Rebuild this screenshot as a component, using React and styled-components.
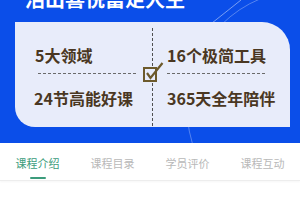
import React from 'react';
import styled, { createGlobalStyle } from 'styled-components';

const GlobalStyle = createGlobalStyle`
  html, body {
    margin: 0;
    padding: 0;
    background: #fff;
  }
  body {
    font-family: "Noto Sans CJK SC", "Noto Sans", sans-serif;
  }
`;

const Page = styled.div`
  width: 300px;
  height: 200px;
  overflow: hidden;
  background: #fff;
`;

const Hero = styled.div`
  position: relative;
  height: 143px;
  overflow: hidden;
  background: #0b4ee9;
`;

const Deco = styled.svg`
  position: absolute;
  left: 0;
  top: 0;
  pointer-events: none;
`;

const Title = styled.div`
  position: relative;
  margin: -12px 0 0 25px;
  height: 22px;
  font-size: 20px;
  line-height: 22px;
  font-weight: 700;
  color: #fff;
  white-space: nowrap;
`;

const Card = styled.div`
  position: relative;
  margin: 12px 0 0 15px;
  width: 275px;
  height: 105px;
  background: #e8ecfa;
  border-radius: 0 28px 0 20px;
  display: grid;
  grid-template-columns: 137px 1px 1fr;
  grid-template-rows: 52px 53px;
`;

const Cell = styled.div`
  grid-column: ${p => p.$col};
  grid-row: ${p => p.$row};
  padding-left: ${p => p.$pad}px;
  padding-top: ${p => (p.$row === 1 ? 22 : 13)}px;
  display: flex;
  flex-direction: column;
`;

const Label = styled.div`
  flex-shrink: 0;
  font-size: 16px;
  line-height: 22px;
  font-weight: 700;
  color: #4a3722;
  white-space: nowrap;
`;

const Rule = styled.div`
  flex-shrink: 0;
  margin-top: 7px;
  margin-left: ${p => p.$offset}px;
  width: 99px;
  height: 1px;
  background: repeating-linear-gradient(
    to right,
    #6a6a6a 0 3px,
    transparent 3px 5px
  );
`;

const Divider = styled.div`
  grid-column: 2;
  grid-row: 1 / 3;
  margin-top: 6px;
  background: repeating-linear-gradient(
    to bottom,
    #4f4f4f 0 3px,
    transparent 3px 5px
  );
`;

const Check = styled.svg`
  position: absolute;
  left: 127px;
  top: 40px;
`;

const Tabs = styled.div`
  display: grid;
  grid-template-columns: repeat(4, 1fr);
  height: 37px;
  border-bottom: 1px solid #ededed;
  box-shadow: 0 1px 2px rgba(0, 0, 0, 0.04);
`;

const Tab = styled.div`
  display: flex;
  flex-direction: column;
  align-items: center;
  padding-top: 13px;
  font-size: 11px;
  line-height: 14px;
  color: ${p => (p.$active ? '#3c9c7c' : '#b9b9b9')};
`;

const Bar = styled.div`
  margin-top: 7px;
  width: 16px;
  height: 2px;
  border-radius: 1px;
  background: #3c9c7c;
`;

const items = [
  { text: '5大领域', col: 1, row: 1, pad: 20, rule: 3 },
  { text: '16个极简工具', col: 3, row: 1, pad: 14, rule: 0 },
  { text: '24节高能好课', col: 1, row: 2, pad: 19 },
  { text: '365天全年陪伴', col: 3, row: 2, pad: 14 },
];

const tabs = ['课程介绍', '课程目录', '学员评价', '课程互动'];

export default function App() {
  return (
    <Page>
      <GlobalStyle />
      <Hero>
        <Deco width="300" height="143" viewBox="0 0 300 143">
          <line x1="241" y1="0" x2="212" y2="23" stroke="rgba(255,255,255,0.45)" strokeWidth="1" />
          <circle cx="305" cy="108" r="118" fill="none" stroke="rgba(255,255,255,0.3)" strokeWidth="1" />
        </Deco>
        <Title>活出喜悦富足人生</Title>
        <Card>
          {items.map(it => (
            <Cell key={it.text} $col={it.col} $row={it.row} $pad={it.pad}>
              <Label>{it.text}</Label>
              {it.rule !== undefined && <Rule $offset={it.rule} />}
            </Cell>
          ))}
          <Divider />
          <Check width="22" height="22" viewBox="0 0 22 22">
            <rect x="2" y="6" width="12" height="13" fill="#e8ecfa" stroke="#6d5a2b" strokeWidth="2" />
            <path d="M5 11 L8.5 16 L20.5 1" fill="none" stroke="#6d5a2b" strokeWidth="2.2" strokeLinejoin="miter" />
          </Check>
        </Card>
      </Hero>
      <Tabs>
        {tabs.map((t, i) => (
          <Tab key={t} $active={i === 0}>
            {t}
            {i === 0 && <Bar />}
          </Tab>
        ))}
      </Tabs>
    </Page>
  );
}
